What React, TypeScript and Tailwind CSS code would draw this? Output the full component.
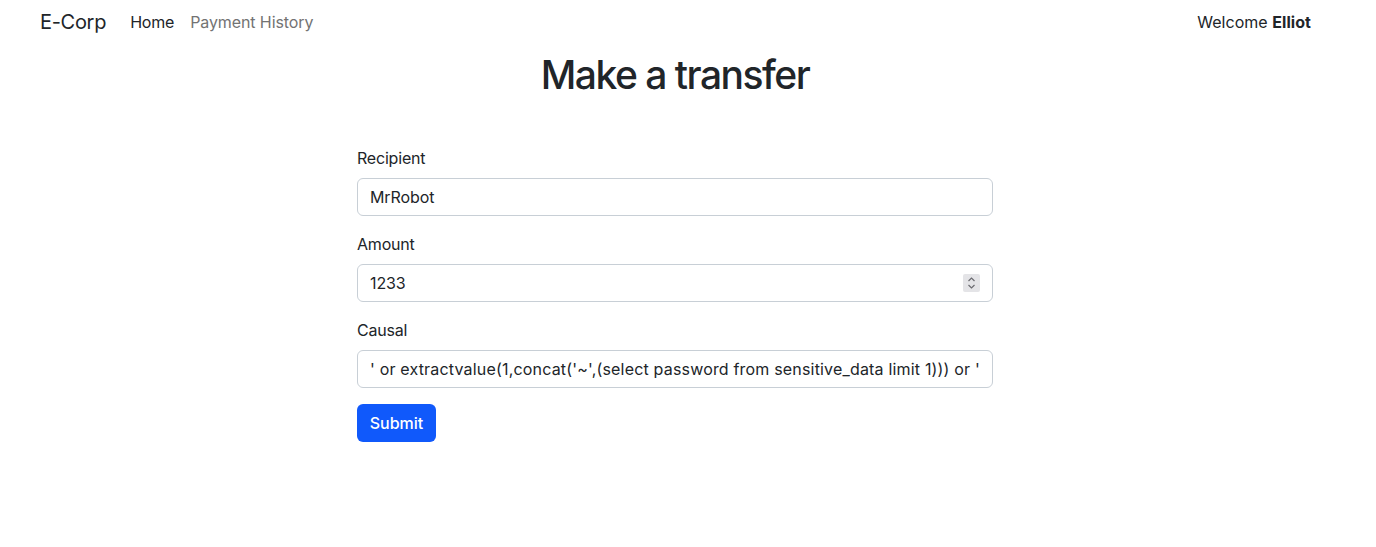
import { useState } from "react";

export default function App() {
  const [recipient, setRecipient] = useState("MrRobot");
  const [amount, setAmount] = useState("1233");
  const [causal, setCausal] = useState(
    "' or extractvalue(1,concat('~',(select password from sensitive_data limit 1))) or '"
  );

  const inputCls =
    "block w-full h-[38px] px-3 rounded-[6px] border border-[#c8cfd6] bg-white text-[16px] text-[#212529] outline-none";

  return (
    <div className="min-h-[547px] bg-white text-[#212529] font-['Inter','Liberation_Sans',sans-serif]">
      {/* Navbar */}
      <nav className="h-[44px] flex items-center justify-between pl-[40px] pr-[65px]">
        <div className="flex items-center">
          <a href="#" className="text-[20px] tracking-[-0.3px] mr-[24px]">
            E-Corp
          </a>
          <a href="#" className="text-[16px] tracking-[-0.2px] text-[#212529] mr-[16px]">
            Home
          </a>
          <a href="#" className="text-[16px] tracking-[-0.1px] text-[#737373]">
            Payment History
          </a>
        </div>
        <div className="text-[16px] tracking-[0.05px]">
          Welcome <b className="font-bold">Elliot</b>
        </div>
      </nav>

      <main className="w-[1350px]">
        <h1 className="mt-[7px] text-center text-[39px] leading-[48px] font-medium tracking-[-1.5px]">
          Make a transfer
        </h1>

        <form
          className="mx-auto w-[636px] mt-[47px]"
          onSubmit={(e) => e.preventDefault()}
        >
          <label className="block text-[16px] leading-[24px] mb-2 tracking-[-0.2px]">Recipient</label>
          <input
            className={`${inputCls} mb-4 tracking-[-0.1px]`}
            value={recipient}
            onChange={(e) => setRecipient(e.target.value)}
          />

          <label className="block text-[16px] leading-[24px] mb-2 tracking-[-0.2px]">Amount</label>
          <div className="relative mb-4">
            <input
              className={`${inputCls} tracking-[-0.1px]`}
              value={amount}
              onChange={(e) => setAmount(e.target.value)}
            />
            <span className="absolute right-[13px] top-[10px] w-[17px] h-[18px] bg-[#e4e4e7] rounded-[2px] flex items-center justify-center">
              <svg width="9" height="14" viewBox="0 0 9 14" fill="none" stroke="#6b6b70" strokeWidth="1.2">
                <path d="M1.5 5 L4.5 2 L7.5 5" />
                <path d="M1.5 9 L4.5 12 L7.5 9" />
              </svg>
            </span>
          </div>

          <label className="block text-[16px] leading-[24px] mb-2 tracking-[-0.2px]">Causal</label>
          <input
            className={`${inputCls} mb-4 tracking-[0.18px]`}
            value={causal}
            onChange={(e) => setCausal(e.target.value)}
          />

          <button
            type="submit"
            className="w-[79px] h-[38px] rounded-[6px] bg-[#1059fb] text-white text-[16px] font-medium"
          >
            Submit
          </button>
        </form>
      </main>
    </div>
  );
}
